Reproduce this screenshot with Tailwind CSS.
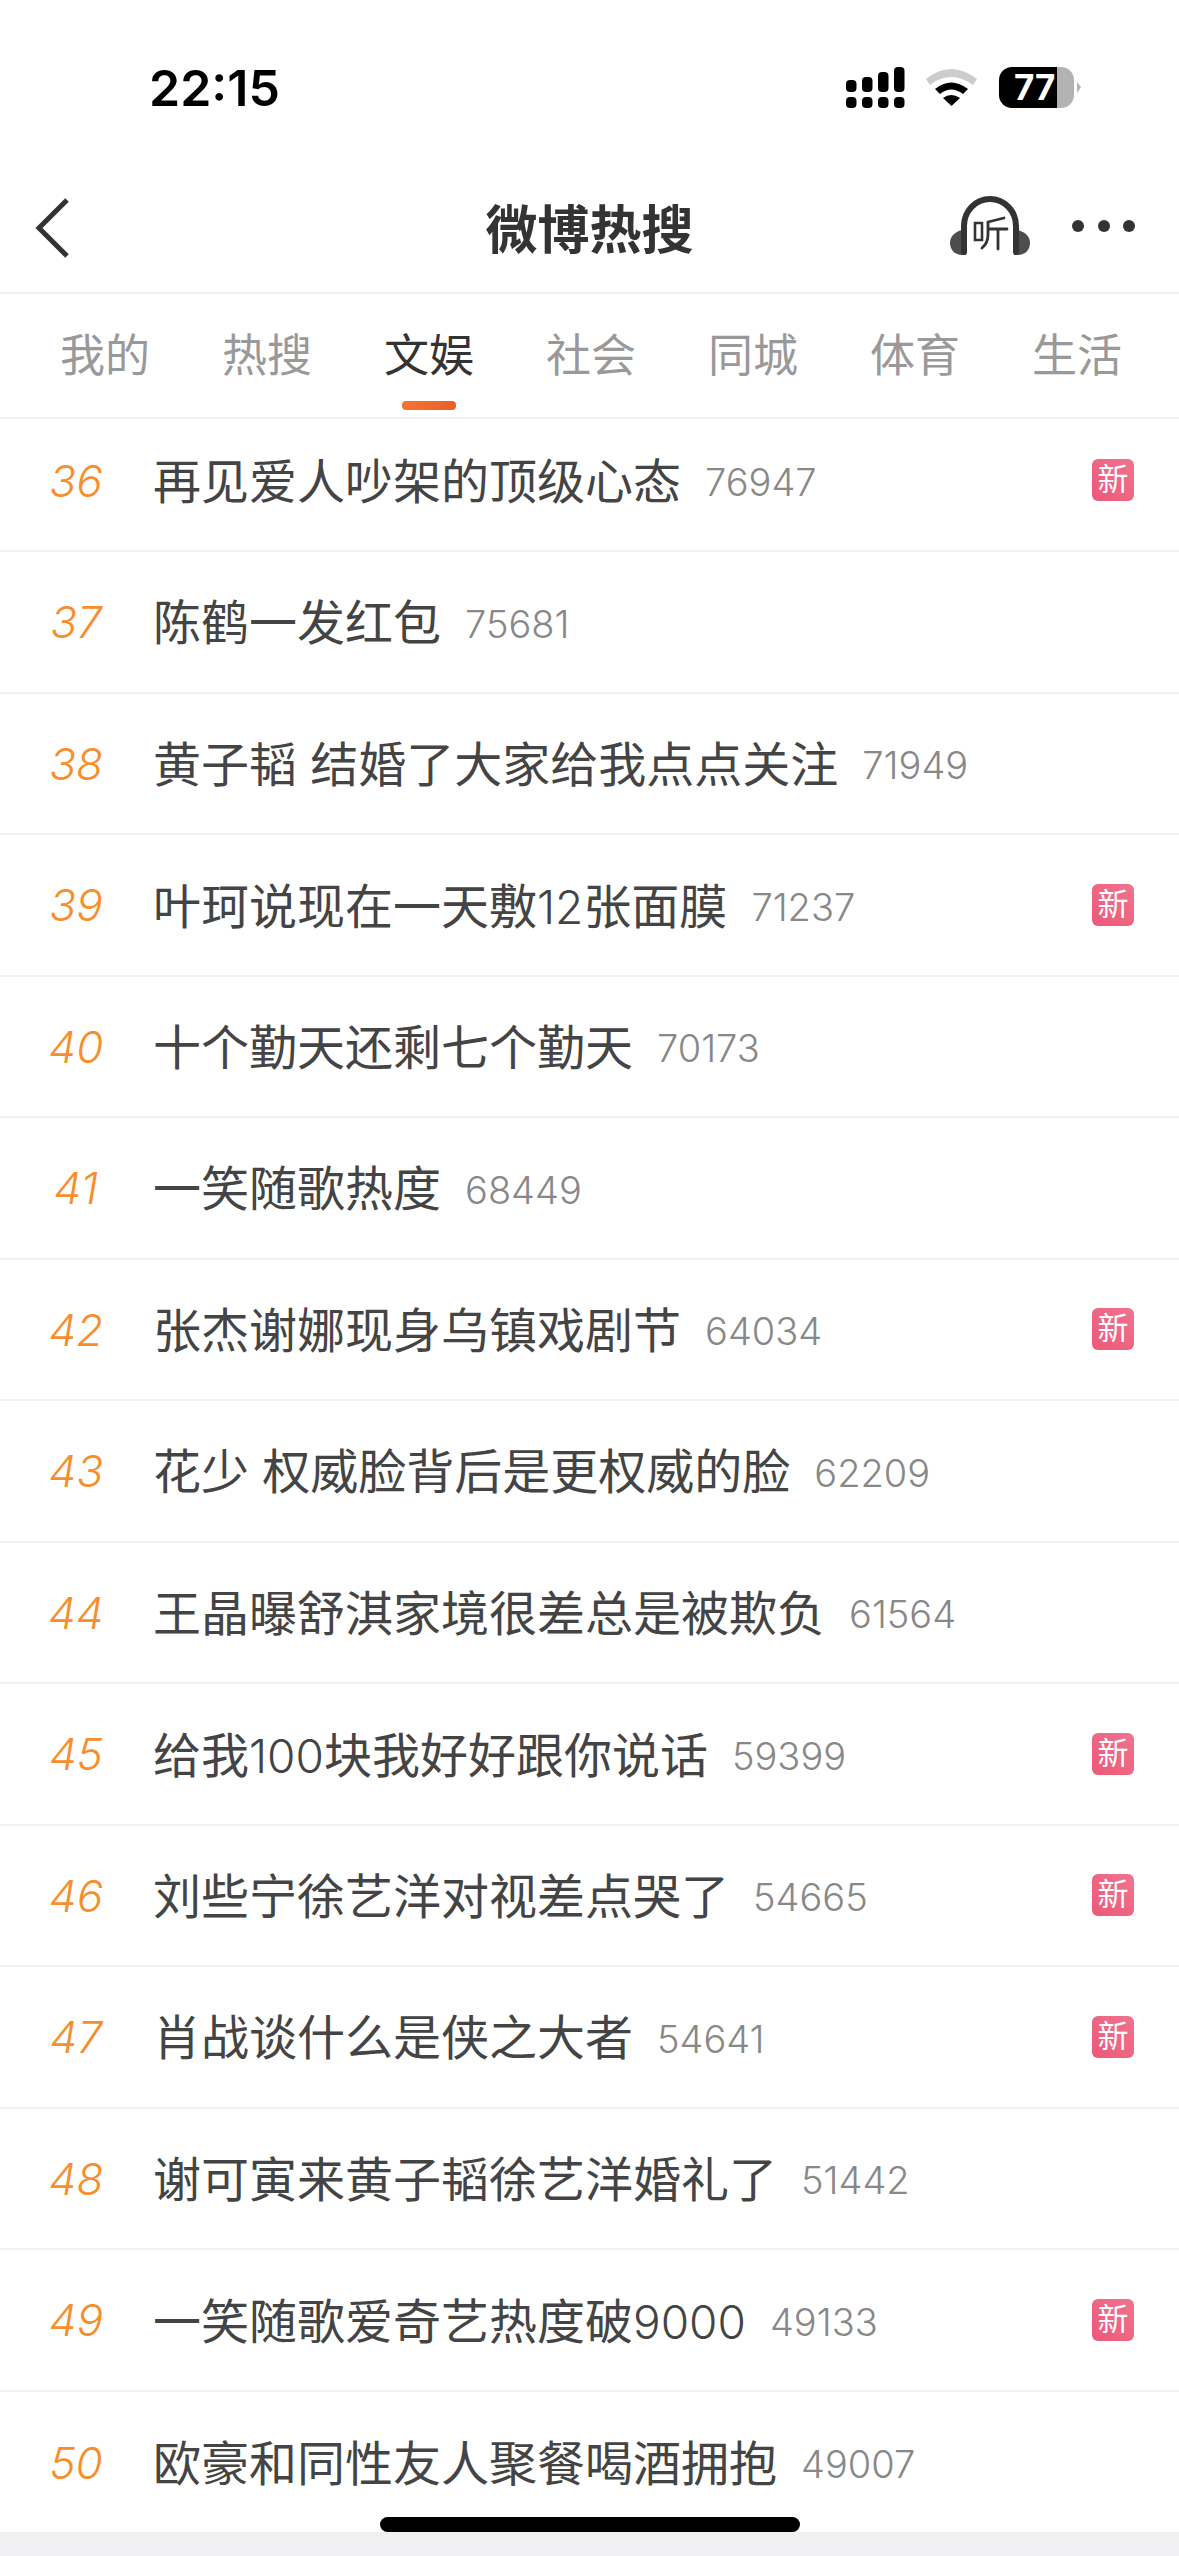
<!DOCTYPE html>
<html lang="zh-CN"><head><meta charset="utf-8">
<script src="https://cdn.jsdelivr.net/npm/@tailwindcss/browser@4"></script>
</head>
<body class="bg-white">
<div class="relative w-[1179px] h-[2556px] overflow-hidden flex flex-col bg-white font-['Liberation_Sans','Noto_Sans_CJK_SC',sans-serif]">
  <!-- status bar -->
  <div class="relative h-[150px] shrink-0">
    <span class="absolute left-[149px] top-[58px] font-['Inter',sans-serif] font-semibold text-[50px] leading-[60px] text-black">22:15</span>
    <svg class="absolute left-[840px] top-[60px]" width="250" height="56" viewBox="840 60 250 56">
      <g fill="#000">
        <rect x="846" y="80" width="10.5" height="12" rx="4"/><rect x="862" y="77" width="10.5" height="15" rx="4"/><rect x="878" y="72" width="10.5" height="20" rx="4"/><rect x="894" y="67" width="10.5" height="25" rx="4"/>
        <rect x="846" y="97" width="10.5" height="11" rx="4"/><rect x="862" y="97" width="10.5" height="11" rx="4"/><rect x="878" y="97" width="10.5" height="11" rx="4"/><rect x="894" y="97" width="10.5" height="11" rx="4"/>
      </g>
      <path d="M926 79 Q951 59 977 79 L973 85 Q951 69 930 85 Z" fill="#cccccc"/>
      <path d="M935 89 Q951 76 968 89 L963 94 Q951 85 940 94 Z" fill="#000"/>
      <path d="M943 98 Q951 92 960 98 L951.5 106 Z" fill="#000"/>
      <path d="M1057 67 H1061 A13 13 0 0 1 1074 80 V95 A13 13 0 0 1 1061 108 H1057 Z" fill="#b3b3b3"/>
      <path d="M1057 67 H1012 A13 13 0 0 0 999 80 V95 A13 13 0 0 0 1012 108 H1057 Z" fill="#000"/>
      <path d="M1077 82 L1081 87 L1077 93 Z" fill="#b3b3b3"/>
    </svg>
    <span class="absolute left-[1014px] top-[66px] font-['Inter',sans-serif] font-bold text-[35px] leading-[42px] text-white">77</span>
  </div>
  <!-- nav -->
  <div class="relative h-[144px] shrink-0 border-b-[2px] border-[#efefef] flex items-start justify-center">
    <svg class="absolute left-[32px] top-[45px]" width="42" height="66" viewBox="0 0 42 66"><path d="M35 5 L7 33 L35 61" fill="none" stroke="#333" stroke-width="5"/></svg>
    <span class="mt-[51px] text-[52px] leading-[60px] font-bold text-[#333]">微博热搜</span>
    <svg class="absolute left-[948px] top-[44px]" width="84" height="64" viewBox="948 194 84 64">
      <path d="M966 229 C955 231 950 236 950 243 C950 250 955 255 962 255 L966 255 Z" fill="#4d4d4d"/>
      <path d="M1014 229 C1025 231 1030 236 1030 243 C1030 250 1025 255 1018 255 L1014 255 Z" fill="#4d4d4d"/>
      <path d="M964 252 V226 A26 27 0 0 1 1016 226 V252" fill="none" stroke="#333" stroke-width="6" stroke-linecap="round"/>
      <path d="M975 223 H982 V240 H975 Z" fill="none" stroke="#333" stroke-width="2.6"/>
      <path d="M1004 218 L988 222 V235 Q988 243 982 248 M988 229 H1007 M998 229 V249" fill="none" stroke="#333" stroke-width="2.8" stroke-linecap="round"/>
    </svg>
    <div class="absolute left-[1072px] top-[70px] flex gap-[13.5px]">
      <span class="size-[12px] rounded-full bg-[#333]"></span><span class="size-[12px] rounded-full bg-[#333]"></span><span class="size-[12px] rounded-full bg-[#333]"></span>
    </div>
  </div>
  <!-- tabs -->
  <div class="relative h-[125px] shrink-0 border-b-[2px] border-[#efefef] pl-[24px] pr-[21px] flex text-[45px] leading-[52px] text-[#999]">
    <div class="flex-1 text-center pt-[37px]">我的</div>
    <div class="flex-1 text-center pt-[37px]">热搜</div>
    <div class="flex-1 text-center pt-[37px] text-[#333] flex flex-col items-center">文娱<span class="mt-[18px] w-[54px] h-[9px] rounded-[4px] bg-linear-to-r from-[#f2752f] to-[#eb5f28]"></span></div>
    <div class="flex-1 text-center pt-[37px]">社会</div>
    <div class="flex-1 text-center pt-[37px]">同城</div>
    <div class="flex-1 text-center pt-[37px]">体育</div>
    <div class="flex-1 text-center pt-[37px]">生活</div>
  </div>
  <!-- list -->
  <div class="flex-1 overflow-hidden text-[#444]">
    <div class="h-[133px] pb-[9px] border-b-[2px] border-[#f2f2f2] flex items-center pl-[46px] pr-[45px]">
      <span class="w-[60px] pt-[1px] text-center italic font-light font-['Inter',sans-serif] text-[44px] text-[#f78e2d]">36</span><span class="ml-[47px] pt-[5px] text-[48px] leading-[60px]">再见爱人吵架的顶级心态</span><span class="ml-[24px] pt-[5px] font-['Inter',sans-serif] font-light text-[38px] text-[#888]">76947</span><span class="ml-auto size-[42px] rounded-[6px] bg-linear-to-tr from-[#ec5876] to-[#f07390] text-white text-[31px] leading-[42px] text-center">新</span>
    </div>
    <div class="h-[141.5px] border-b-[2px] border-[#f2f2f2] flex items-center pl-[46px] pr-[45px]">
      <span class="w-[60px] pt-[1px] text-center italic font-light font-['Inter',sans-serif] text-[44px] text-[#f78e2d]">37</span><span class="ml-[47px] pt-[5px] text-[48px] leading-[60px]">陈鹤一发红包</span><span class="ml-[24px] pt-[5px] font-['Inter',sans-serif] font-light text-[38px] text-[#888]">75681</span>
    </div>
    <div class="h-[141.5px] border-b-[2px] border-[#f2f2f2] flex items-center pl-[46px] pr-[45px]">
      <span class="w-[60px] pt-[1px] text-center italic font-light font-['Inter',sans-serif] text-[44px] text-[#f78e2d]">38</span><span class="ml-[47px] pt-[5px] text-[48px] leading-[60px]">黄子韬 结婚了大家给我点点关注</span><span class="ml-[24px] pt-[5px] font-['Inter',sans-serif] font-light text-[38px] text-[#888]">71949</span>
    </div>
    <div class="h-[141.5px] border-b-[2px] border-[#f2f2f2] flex items-center pl-[46px] pr-[45px]">
      <span class="w-[60px] pt-[1px] text-center italic font-light font-['Inter',sans-serif] text-[44px] text-[#f78e2d]">39</span><span class="ml-[47px] pt-[5px] text-[48px] leading-[60px]">叶珂说现在一天敷<span class="font-['Inter',sans-serif] font-light text-[46px]">12</span>张面膜</span><span class="ml-[24px] pt-[5px] font-['Inter',sans-serif] font-light text-[38px] text-[#888]">71237</span><span class="ml-auto size-[42px] rounded-[6px] bg-linear-to-tr from-[#ec5876] to-[#f07390] text-white text-[31px] leading-[42px] text-center">新</span>
    </div>
    <div class="h-[141.5px] border-b-[2px] border-[#f2f2f2] flex items-center pl-[46px] pr-[45px]">
      <span class="w-[60px] pt-[1px] text-center italic font-light font-['Inter',sans-serif] text-[44px] text-[#f78e2d]">40</span><span class="ml-[47px] pt-[5px] text-[48px] leading-[60px]">十个勤天还剩七个勤天</span><span class="ml-[24px] pt-[5px] font-['Inter',sans-serif] font-light text-[38px] text-[#888]">70173</span>
    </div>
    <div class="h-[141.5px] border-b-[2px] border-[#f2f2f2] flex items-center pl-[46px] pr-[45px]">
      <span class="w-[60px] pt-[1px] text-center italic font-light font-['Inter',sans-serif] text-[44px] text-[#f78e2d]">41</span><span class="ml-[47px] pt-[5px] text-[48px] leading-[60px]">一笑随歌热度</span><span class="ml-[24px] pt-[5px] font-['Inter',sans-serif] font-light text-[38px] text-[#888]">68449</span>
    </div>
    <div class="h-[141.5px] border-b-[2px] border-[#f2f2f2] flex items-center pl-[46px] pr-[45px]">
      <span class="w-[60px] pt-[1px] text-center italic font-light font-['Inter',sans-serif] text-[44px] text-[#f78e2d]">42</span><span class="ml-[47px] pt-[5px] text-[48px] leading-[60px]">张杰谢娜现身乌镇戏剧节</span><span class="ml-[24px] pt-[5px] font-['Inter',sans-serif] font-light text-[38px] text-[#888]">64034</span><span class="ml-auto size-[42px] rounded-[6px] bg-linear-to-tr from-[#ec5876] to-[#f07390] text-white text-[31px] leading-[42px] text-center">新</span>
    </div>
    <div class="h-[141.5px] border-b-[2px] border-[#f2f2f2] flex items-center pl-[46px] pr-[45px]">
      <span class="w-[60px] pt-[1px] text-center italic font-light font-['Inter',sans-serif] text-[44px] text-[#f78e2d]">43</span><span class="ml-[47px] pt-[5px] text-[48px] leading-[60px]">花少 权威脸背后是更权威的脸</span><span class="ml-[24px] pt-[5px] font-['Inter',sans-serif] font-light text-[38px] text-[#888]">62209</span>
    </div>
    <div class="h-[141.5px] border-b-[2px] border-[#f2f2f2] flex items-center pl-[46px] pr-[45px]">
      <span class="w-[60px] pt-[1px] text-center italic font-light font-['Inter',sans-serif] text-[44px] text-[#f78e2d]">44</span><span class="ml-[47px] pt-[5px] text-[48px] leading-[60px]">王晶曝舒淇家境很差总是被欺负</span><span class="ml-[24px] pt-[5px] font-['Inter',sans-serif] font-light text-[38px] text-[#888]">61564</span>
    </div>
    <div class="h-[141.5px] border-b-[2px] border-[#f2f2f2] flex items-center pl-[46px] pr-[45px]">
      <span class="w-[60px] pt-[1px] text-center italic font-light font-['Inter',sans-serif] text-[44px] text-[#f78e2d]">45</span><span class="ml-[47px] pt-[5px] text-[48px] leading-[60px]">给我<span class="font-['Inter',sans-serif] font-light text-[46px]">100</span>块我好好跟你说话</span><span class="ml-[24px] pt-[5px] font-['Inter',sans-serif] font-light text-[38px] text-[#888]">59399</span><span class="ml-auto size-[42px] rounded-[6px] bg-linear-to-tr from-[#ec5876] to-[#f07390] text-white text-[31px] leading-[42px] text-center">新</span>
    </div>
    <div class="h-[141.5px] border-b-[2px] border-[#f2f2f2] flex items-center pl-[46px] pr-[45px]">
      <span class="w-[60px] pt-[1px] text-center italic font-light font-['Inter',sans-serif] text-[44px] text-[#f78e2d]">46</span><span class="ml-[47px] pt-[5px] text-[48px] leading-[60px]">刘些宁徐艺洋对视差点哭了</span><span class="ml-[24px] pt-[5px] font-['Inter',sans-serif] font-light text-[38px] text-[#888]">54665</span><span class="ml-auto size-[42px] rounded-[6px] bg-linear-to-tr from-[#ec5876] to-[#f07390] text-white text-[31px] leading-[42px] text-center">新</span>
    </div>
    <div class="h-[141.5px] border-b-[2px] border-[#f2f2f2] flex items-center pl-[46px] pr-[45px]">
      <span class="w-[60px] pt-[1px] text-center italic font-light font-['Inter',sans-serif] text-[44px] text-[#f78e2d]">47</span><span class="ml-[47px] pt-[5px] text-[48px] leading-[60px]">肖战谈什么是侠之大者</span><span class="ml-[24px] pt-[5px] font-['Inter',sans-serif] font-light text-[38px] text-[#888]">54641</span><span class="ml-auto size-[42px] rounded-[6px] bg-linear-to-tr from-[#ec5876] to-[#f07390] text-white text-[31px] leading-[42px] text-center">新</span>
    </div>
    <div class="h-[141.5px] border-b-[2px] border-[#f2f2f2] flex items-center pl-[46px] pr-[45px]">
      <span class="w-[60px] pt-[1px] text-center italic font-light font-['Inter',sans-serif] text-[44px] text-[#f78e2d]">48</span><span class="ml-[47px] pt-[5px] text-[48px] leading-[60px]">谢可寅来黄子韬徐艺洋婚礼了</span><span class="ml-[24px] pt-[5px] font-['Inter',sans-serif] font-light text-[38px] text-[#888]">51442</span>
    </div>
    <div class="h-[141.5px] border-b-[2px] border-[#f2f2f2] flex items-center pl-[46px] pr-[45px]">
      <span class="w-[60px] pt-[1px] text-center italic font-light font-['Inter',sans-serif] text-[44px] text-[#f78e2d]">49</span><span class="ml-[47px] pt-[5px] text-[48px] leading-[60px]">一笑随歌爱奇艺热度破<span class="font-['Inter',sans-serif] font-light text-[46px]">9000</span></span><span class="ml-[24px] pt-[5px] font-['Inter',sans-serif] font-light text-[38px] text-[#888]">49133</span><span class="ml-auto size-[42px] rounded-[6px] bg-linear-to-tr from-[#ec5876] to-[#f07390] text-white text-[31px] leading-[42px] text-center">新</span>
    </div>
    <div class="h-[141.5px] flex items-center pl-[46px] pr-[45px]">
      <span class="w-[60px] pt-[1px] text-center italic font-light font-['Inter',sans-serif] text-[44px] text-[#f78e2d]">50</span><span class="ml-[47px] pt-[5px] text-[48px] leading-[60px]">欧豪和同性友人聚餐喝酒拥抱</span><span class="ml-[24px] pt-[5px] font-['Inter',sans-serif] font-light text-[38px] text-[#888]">49007</span>
    </div>
  </div>
  <div class="h-[24px] shrink-0 bg-[#f0f0f3]"></div>
  <div class="absolute left-[380px] top-[2517px] w-[420px] h-[15px] rounded-[8px] bg-black"></div>
</div>
</body></html>
